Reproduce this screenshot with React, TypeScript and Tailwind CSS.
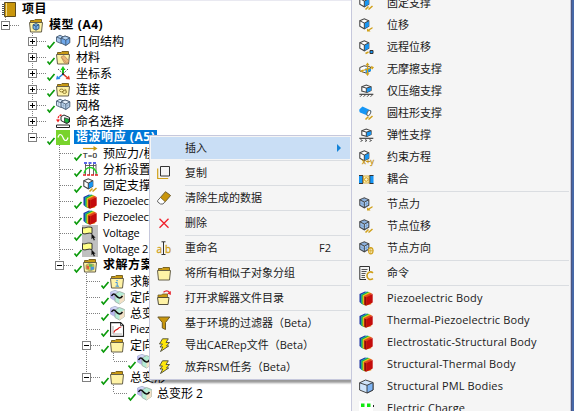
import type { ReactNode } from 'react';

/* ---------- icons ---------- */

function Icon({ children, size = 15 }: { children: ReactNode; size?: number }) {
  return (
    <svg width={size} height={size} viewBox="0 0 15 15" fill="none" className="block shrink-0 overflow-visible">
      {children}
    </svg>
  );
}

const Folder = ({ children }: { children?: ReactNode }) => (
  <Icon>
    <path d="M1.5 4V2.5H5L6 1.500h6.500v2.500" fill="#c99a12" stroke="#7a6426" />
    <path d="M.5 4.5h13l-1 9.5h-11z" fill="#fff3a6" stroke="#66604a" />
    {children}
  </Icon>
);

const Book = () => (
  <Icon>
    <path d="M2.5.5h11v14h-11z" fill="#c9960c" stroke="#5d4a1c" />
    <path d="M4.5 1v13" stroke="#f3dc8b" />
    <path d="M0 2.5h4M0 4.5h4M0 6.5h4M0 8.5h4M0 10.5h4M0 12.5h4" stroke="#555" strokeDasharray="3 1" />
  </Icon>
);

const ModelIcon = () => (
  <Folder>
    <path d="M7 5.5l3 1.3v3.8L7 12.2l-3-1.6V6.8z" fill="#7db7ee" stroke="#24476e" strokeWidth=".8" />
    <path d="M4 6.8l3 1.4 3-1.4M7 8.2v4" stroke="#24476e" strokeWidth=".8" />
  </Folder>
);

const Blocks = ({ mesh = false }: { mesh?: boolean }) => (
  <Icon>
    <path d="M.5 3L4 1.2 7.5 3v4.5L5 9.5.5 7.5z" fill={mesh ? '#d5e6f7' : '#a9c9ec'} stroke="#4b6078" strokeWidth=".9" />
    <path d="M5 4l4-2 4.8 1.8v5l-4 2.7L5 9z" fill={mesh ? '#bcd8f3' : '#6fa8ea'} stroke="#3c5068" strokeWidth=".9" />
    <path d="M5 4l4.8 2 4-2.2L9 2z" fill={mesh ? '#e6f0fa' : '#b5d4f5'} stroke="#3c5068" strokeWidth=".8" />
    <path d="M9.800 6v5.500M.5 3L5 4.8" stroke="#3c5068" strokeWidth=".8" />
    {mesh && <path d="M7.500 5v5M11.800 5v5M5 6.500l4.800 2 4-2.300M2.500 4v4.300" stroke="#8a9cae" strokeWidth=".5" />}
  </Icon>
);

const Material = () => (
  <Folder>
    <path d="M5 7l3-1.500L13 11l-2 2.500-2.500-.5z" fill="#e8b77a" stroke="#b08050" strokeWidth=".7" />
    <path d="M6 8l4.500 4.500" stroke="#c89058" strokeWidth=".6" />
  </Folder>
);

const Axes = () => (
  <Icon>
    <path d="M2 3l10 9M12 3L3 12" stroke="#555" strokeDasharray="1.5 1" />
    <path d="M7 8V3" stroke="#18b818" strokeWidth="2" />
    <path d="M4.500 4L7 0l2.500 4z" fill="#18c818" />
    <path d="M7 8l-4 3.500" stroke="#2687e8" strokeWidth="1.5" />
    <path d="M0 13.500l1-4 3.500 3.500z" fill="#2687e8" />
    <path d="M7 8l4 3.500" stroke="#e23c2a" strokeWidth="1.5" />
    <path d="M14 13.500L9.500 13 13 9.500z" fill="#e23c2a" />
    <rect x="6" y="7" width="2" height="2" fill="#333" />
  </Icon>
);

const Connections = () => (
  <Folder>
    <ellipse cx="5.5" cy="8.500" rx="2" ry="1.400" stroke="#8a7428" strokeWidth=".9" />
    <ellipse cx="8.500" cy="10" rx="2" ry="1.400" stroke="#8a7428" strokeWidth=".9" />
    <path d="M8.500 7.300l2 1" stroke="#8a7428" strokeWidth=".9" />
  </Folder>
);

const Named = () => (
  <Icon>
    <path d="M5 2.500L8 1l5.500 2.500V8L10.500 9.500 5 6.500z" fill="#fff" stroke="#222" />
    <path d="M8.500 3.700l4.500 1.500V8l-2 1.200-2.500-1.400z" fill="#17b53a" stroke="#222" strokeWidth=".7" />
    <path d="M5.500 1C3 1.300 2 3 2 5.500" stroke="#e22" strokeWidth="1.300" strokeDasharray="2 .8" />
    <path d="M0 5.500h4L2 8.500z" fill="#e22" />
    <path d="M.5 11h13v2.500H.5z" fill="#fff" stroke="#222" />
  </Icon>
);

const Harmonic = () => (
  <Icon>
    <path d="M0 0h14v15H0z" fill="#78d32c" />
    <path d="M2 7.5c1-4 3.500-4 5 0s4 4 5 0" stroke="#fff" strokeWidth="1.2" />
  </Icon>
);

const Prestress = () => (
  <Icon>
    <path d="M0 2.500h11" stroke="#c99a12" strokeWidth="1.2" />
    <path d="M10.500 0L14.500 2.500l-4 2.500z" fill="#c99a12" />
    <text x="0" y="12" fontSize="8" fill="#222" stroke="#222" strokeWidth=".2" fontFamily="Open Sans, sans-serif" textLength="14">
      T=0
    </text>
  </Icon>
);

const Settings = () => (
  <Icon>
    <path d="M1 1h12.500" stroke="#2233dd" strokeWidth="1.600" strokeDasharray="3 1.500" />
    <path d="M2.500 2v11M6.500 2v11M10.500 2v11M13 2v11M2 3.500h11" stroke="#555" strokeWidth=".9" />
    <path d="M1 11.500C3 3.500 11 3.500 14 11.500" stroke="#20d020" strokeWidth="1.400" />
    <path d="M0 13h15" stroke="#e02020" strokeWidth="1.400" strokeDasharray="3 1" />
  </Icon>
);

/* Small cube with a blue face; the mark at the lower right tells the kind. */
const Cube = ({ children, nodal = false }: { children?: ReactNode; nodal?: boolean }) => (
  <Icon>
    <path d="M.8 2.800L5.300.8l4.500 2v5.400l-4.500 2.600L.8 8.200z" fill={nodal ? '#a9cdf4' : '#fff'} stroke="#454545" strokeWidth="1.1" />
    {!nodal && <path d="M5.300 5l4.500-2v5.200l-4.500 2.600z" fill="#1696f5" />}
    {nodal && <path d="M3 1.800l4.600 2.400v5.200M7.600 1.800L3 4v5.400M.8 5.500l4.500 2.400 4.500-2.400" stroke="#6f96c8" strokeWidth=".6" />}
    <path d="M.8 2.800l4.500 2.200 4.500-2.200M5.300 5v5.800" stroke="#454545" strokeWidth="1" />
    {children}
  </Icon>
);
const Hatch = () => <path d="M6.500 13.500l3-3M9.500 13.500l4-3.500" stroke="#d0a01a" strokeWidth="1.500" />;
const SmallArrow = () => <path d="M8 13.500v-3l1.300 1L13.500 9v1.400l-3 1.800 1 1.300z" fill="#d0a01a" />;

const FixedIcon = () => (<Cube><Hatch /></Cube>);
const DispIcon = () => (<Cube><SmallArrow /></Cube>);
const RemoteIcon = () => (
  <Cube>
    <path d="M6.500 13.500l3-1.500" stroke="#d0a01a" strokeWidth="1.4" />
    <path d="M11 10.500h3v3h-3z" fill="#1696f5" stroke="#333" />
  </Cube>
);
const Frictionless = () => (
  <Icon>
    <path d="M.8 5.500L5 3.800l6.500 1.200v4L7 11 .8 9z" fill="#fff" stroke="#454545" />
    <path d="M6 6.500h6V9L7 11z" fill="#1696f5" />
    <path d="M8.500 2v10M2 9l12-3.500" stroke="#d0a01a" strokeWidth="1.3" />
    <path d="M6.500 3.300L8.500.5l2 2.800zM6.500 11.200l2 2.800 2-2.800zM12 3.800l3 1.500-2 2.500zM4 7.500L.8 9.300 4 10.500z" fill="#d0a01a" />
  </Icon>
);
const OnGround = ({ spring = false }: { spring?: boolean }) => (
  <Icon>
    <path d="M2.800 2.800L7.300 1l4.800 1.800V6.500L8 8.500 2.800 7z" fill="#fff" stroke="#454545" strokeWidth="1.1" />
    <path d="M7.300 4l4.800-1v3.500L7.300 8.500z" fill="#1696f5" />
    <path d="M2.800 2.800l4.500 1.300 4.800-1.300M7.300 4.100v4.400" stroke="#454545" />
    <path d="M.3 10.300h14" stroke="#333" strokeWidth="1.1" />
    <path d={spring ? 'M1.500 11.500l2 1-2 1M6 11.500l2 1-2 1M10.500 11.500l2 1-2 1' : 'M1 12.800l2-2M4.500 12.800l2-2M8 12.800l2-2M11.500 12.800l2-2'} stroke="#444" strokeWidth=".9" />
  </Icon>
);
const Cylinder = () => (
  <Icon>
    <path d="M.5 3.200L3.500.5 12 4.500c1 1.800-1.300 4.800-3.500 5L1 6.500C.2 5.500.2 4.200.5 3.200z" fill="#1696f5" />
    <ellipse cx="9.800" cy="7" rx="1.600" ry="2.800" transform="rotate(28 9.800 7)" fill="#fff" stroke="#666" strokeWidth=".9" />
    <Hatch />
  </Icon>
);
const Constraint = () => (
  <Cube>
    <text x="3" y="14" fontSize="7.500" fill="#c8981a" stroke="#c8981a" strokeWidth=".3" fontFamily="Open Sans, sans-serif" textLength="12">
      x+y
    </text>
  </Cube>
);
const Coupling = () => (
  <Icon>
    <path d="M0 3.500h3.500v8H0zM11 3.500h3.500v8H11z" fill="#1696f5" />
    <path d="M0 3.500h4M0 11.500h4M10.500 3.500h4M10.500 11.500h4M3.800 3.500v8M10.800 3.500v8" stroke="#333" />
    <path d="M4.500 4h5.500v7H4.500z" fill="#fff4c8" stroke="#d0a01a" strokeWidth=".8" />
    <circle cx="7.300" cy="7.500" r="1.800" stroke="#d0a01a" />
  </Icon>
);
const NodalForce = () => (<Cube nodal><SmallArrow /></Cube>);
const NodalDisp = () => (<Cube nodal><Hatch /></Cube>);
const NodalDir = () => (
  <Cube nodal>
    <ellipse cx="11.800" cy="9.800" rx="2.200" ry="3.200" fill="#fff8dc" stroke="#d0a01a" strokeWidth="1.1" />
    <path d="M9.500 9.800h5M11.800 6.500v6.500" stroke="#d0a01a" strokeWidth=".8" />
  </Cube>
);
const Command = () => (
  <Icon>
    <path d="M10.500 5V.5H.8v13H7" stroke="#333" />
    <path d="M2.500 3.500h6M2.500 5.500h5M2.500 7.500h4M2.500 9.500h3.500M2.500 11.500h3.500" stroke="#444" strokeWidth=".9" />
    <path d="M14 6.800c-2.500-2-6-.5-6 3s3.500 4.500 6 2.800" stroke="#d0a01a" strokeWidth="1.6" />
  </Icon>
);

const Rainbow = () => (
  <Icon>
    <path d="M.500 3L6.500.2l1 13L3 13 .500 11z" fill="#1a2fa0" />
    <path d="M1.800 3.500L7.800.5 9.500 1v12l-5 1-2.700-1.800z" fill="#18a0c0" />
    <path d="M2.600 3.900L8.800.8l1.700.5v12l-5 1-2.900-1.700z" fill="#28b038" />
    <path d="M3.700 4.400L10 1.300l1.500.5v11.500L6 14.300l-2.300-1.200z" fill="#e8d820" />
    <path d="M4.600 4.900L11 1.800l1.300.5v11L6.500 14.600l-1.900-1z" fill="#e87818" />
    <path d="M5.300 5.200l1.900 1v8.600l-1.900-1.100z" fill="#8c0c0c" />
    <path d="M5.300 5.200L12 2.200l1.700.9-6.500 3.100z" fill="#e04020" />
    <path d="M7.200 6.200l6.500-3.100v8.400l-6.500 3.300z" fill="#c40c0c" />
  </Icon>
);

const Voltage = () => (
  <Icon>
    <path d="M-1 -1h16v16H-1z" fill="#c0c0c0" />
    <path d="M-.5 1.500c2.500 1.500 4-1.500 9.500 0v6c-4-1.500-6 1.500-9.500 0z" fill="#ffff88" stroke="#222" strokeWidth=".9" />
    <path d="M8.500 7.500v5.800l1.300-1.200 1 2.400 1.100-.5-1-2.200h1.700z" fill="#111" />
  </Icon>
);

const Solution = () => (
  <Folder>
    <path d="M3 7l3-1.500L11 6.500v5l-4 1.500-4-2z" fill="#d8cc50" stroke="#8a8a60" strokeWidth=".6" />
    <path d="M3.500 7.500l2.500.5v3.500l-2.500-1z" fill="#e05a3c" />
    <path d="M6 6.200h3.500v2.600H6z" fill="#5cb860" />
    <path d="M7.500 8.800H11v2.500l-3.500 1.200z" fill="#4a96d8" />
  </Folder>
);

const SolInfo = () => (
  <Folder>
    <path d="M5.500 8.500H7.200v3.500M5.500 12.200h3.500" stroke="#3a92e0" strokeWidth="1" />
    <path d="M6.400 6h1.300v1.300H6.400z" fill="#3a92e0" />
  </Folder>
);

const Result = () => (
  <Icon>
    <path d="M.5 2L5 .3 9 2v7L5 10.500.5 8z" fill="#d3d9f8" stroke="#a8b2cc" strokeWidth=".8" />
    <path d="M.5 2L5 3.800V10.500L.5 8z" fill="#b9b6ee" />
    <path d="M5 4l4.500-2.500 5 2v7l-5 3.500L5 11.500z" fill="#b4ecd6" stroke="#9aa8a0" strokeWidth=".8" />
    <path d="M9.500 7l5-3v6.500l-5 3.500z" fill="#f3e0c6" />
    <path d="M1.500 6c1.500-3 3-2.500 4.500-.5S10 9.500 12.500 6" stroke="#111" strokeWidth="1.500" />
  </Icon>
);

const Chart = () => (
  <Icon>
    <path d="M.6.600h10L13.500 3.500v10.900H.600z" fill="#fff" stroke="#222" strokeWidth="1.100" />
    <path d="M10.500.6v3h3" stroke="#222" strokeWidth=".8" />
    <path d="M3 4v8h9" stroke="#999" strokeWidth=".8" />
    <path d="M3.800 10.500c1.500-4 3-2 4.500-4.200 1-1.300 2-1.300 3-1.300" stroke="#d81818" strokeWidth="1.200" />
  </Icon>
);

const PmlBody = () => (
  <Icon>
    <path d="M.6 3.800L6.500 1l7.500 2.500v7.500L8 14 .6 11z" fill="#cfe4fb" stroke="#333" strokeWidth=".9" />
    <path d="M8 6.300l6-2.800V11l-6 3z" fill="#7db4f5" stroke="#333" strokeWidth=".9" />
    <path d="M.6 3.800L8 6.300" stroke="#333" strokeWidth=".9" />
  </Icon>
);
const Charge = () => (
  <Icon>
    <path d="M0 0h14v15H0z" fill="#fff" />
    <path d="M2 2.500h3.500V6H2zM8 2.500h3.500V6H8z" fill="#10e810" />
    <path d="M14 4h1v2h-1z" fill="#222" />
  </Icon>
);

const Copy = () => (
  <Icon>
    <path d="M3.500.5h9v9.500h-9z" stroke="#333" />
    <path d="M.7 2.500v10h10.500" stroke="#d0a01a" strokeWidth="1.200" />
  </Icon>
);
const Eraser = () => (
  <Icon>
    <path d="M.7 9.500L8.500.8l5 3.700L6 13H3.500L.7 11z" fill="#fff" stroke="#666" />
    <path d="M3.500 6.500L8.500.8l5 3.700-5.300 6.200z" fill="#c9960c" stroke="#7a6630" strokeWidth=".8" />
  </Icon>
);
const Cross = () => (
  <Icon>
    <path d="M2.500 2.800l9 9M11.500 2.800l-9 9" stroke="#f0202a" strokeWidth="1.300" />
  </Icon>
);
const Rename = () => (
  <Icon>
    <text x="-.5" y="11.500" fontSize="10" fill="#d0a01a" stroke="#d0a01a" strokeWidth=".3" fontFamily="Open Sans, sans-serif">a</text>
    <text x="8" y="11.500" fontSize="10" fill="#d0a01a" stroke="#d0a01a" strokeWidth=".3" fontFamily="Open Sans, sans-serif">b</text>
    <path d="M6.500 1v12.500M4.500.800h4M4.500 13.500h4" stroke="#333" />
  </Icon>
);
const OpenDir = () => (
  <Icon>
    <path d="M1 6V4h3.500l1-1h5v3" fill="#c99a12" stroke="#6b5a2a" strokeWidth=".8" />
    <path d="M.5 6.500h11.500l-1 7H1.500z" fill="#fff3a6" stroke="#55503c" />
    <path d="M6.500 1.300C8.500-.3 11-.3 12.500 1.500" stroke="#e8202a" strokeWidth="1.200" />
    <path d="M13.800 0v4l-3.500-1.500z" fill="#e8202a" />
  </Icon>
);
const Funnel = () => (
  <Icon>
    <path d="M.8 1h12L8.500 6.500v7L5.300 12V6.500z" fill="#c9960c" stroke="#6b5a2a" />
  </Icon>
);
const Bolt = () => (
  <Icon>
    <path d="M5.500.8h5.800L9 4.500h3.500L9.500 8h2.200L3.500 13.500l2.300-4.500H3L5.500 6H2.500z" fill="#ffe80a" stroke="#4a4a3a" strokeWidth=".9" />
  </Icon>
);

/* ---------- outline tree ---------- */

type Toggle = 'box' | 'tee' | 'end';
interface Node {
  level: number;
  label: string;
  icon: ReactNode;
  toggle?: Toggle;
  plus?: boolean;
  last?: boolean;
  check?: boolean;
  bold?: boolean;
  latin?: boolean;
  selected?: boolean;
  /** An ancestor one level up has further siblings below. */
  through?: boolean;
}

const nodes: Node[] = [
  { level: 0, label: '项目', icon: <Book />, bold: true },
  { level: 1, label: '模型 (A4)', icon: <ModelIcon />, toggle: 'box', last: true, bold: true },
  { level: 2, label: '几何结构', icon: <Blocks />, toggle: 'box', plus: true, check: true },
  { level: 2, label: '材料', icon: <Material />, toggle: 'box', plus: true, check: true },
  { level: 2, label: '坐标系', icon: <Axes />, toggle: 'box', plus: true, check: true },
  { level: 2, label: '连接', icon: <Connections />, toggle: 'box', plus: true, check: true },
  { level: 2, label: '网格', icon: <Blocks mesh />, toggle: 'box', plus: true, check: true },
  { level: 2, label: '命名选择', icon: <Named />, toggle: 'box', plus: true },
  { level: 2, label: '谐波响应 (A5)', icon: <Harmonic />, toggle: 'box', last: true, check: true, bold: true, selected: true },
  { level: 3, label: '预应力/模态', icon: <Prestress />, toggle: 'tee', check: true },
  { level: 3, label: '分析设置', icon: <Settings />, toggle: 'tee', check: true },
  { level: 3, label: '固定支撑', icon: <FixedIcon />, toggle: 'tee', check: true },
  { level: 3, label: 'Piezoelectric', icon: <Rainbow />, toggle: 'tee', check: true, latin: true },
  { level: 3, label: 'Piezoelectric', icon: <Rainbow />, toggle: 'tee', check: true, latin: true },
  { level: 3, label: 'Voltage', icon: <Voltage />, toggle: 'tee', check: true, latin: true },
  { level: 3, label: 'Voltage 2', icon: <Voltage />, toggle: 'tee', check: true, latin: true },
  { level: 3, label: '求解方案', icon: <Solution />, toggle: 'box', last: true, check: true, bold: true },
  { level: 4, label: '求解', icon: <SolInfo />, toggle: 'tee', check: true },
  { level: 4, label: '定向', icon: <Result />, toggle: 'tee', check: true },
  { level: 4, label: '总变', icon: <Result />, toggle: 'tee', check: true },
  { level: 4, label: 'Piez', icon: <Chart />, toggle: 'tee', check: true, latin: true },
  { level: 4, label: '定向', icon: <Folder />, toggle: 'box', check: true },
  { level: 5, label: '', icon: <Result />, toggle: 'end', check: true, through: true },
  { level: 4, label: '总变形', icon: <Folder />, toggle: 'box', last: true, check: true },
  { level: 5, label: '总变形 2', icon: <Result />, toggle: 'end', check: true },
];

function Cell({ node }: { node: Node }) {
  const { toggle, plus, last, check } = node;
  const stop = last || toggle === 'end';
  return (
    <svg width="27" height="16" viewBox="0 0 27 16" fill="none" className="block shrink-0 overflow-visible" shapeRendering="crispEdges">
      <path d={stop ? 'M5.500 0v8' : 'M5.500 0v16'} stroke="#808080" strokeDasharray="1 1" />
      <path d="M6 8.500h14" stroke="#808080" strokeDasharray="1 1" />
      {toggle === 'box' && (
        <>
          <path d="M1.500 4.500h8v8h-8z" fill="#fff" stroke="#808080" />
          <path d="M3 8.500h5" stroke="#000" />
          {plus && <path d="M5.500 6v5" stroke="#000" />}
        </>
      )}
      {check && <path d="M20.500 12.500l2 2.500 5-6" stroke="#0a9a0a" strokeWidth="1.700" shapeRendering="auto" />}
    </svg>
  );
}

function TreeRow({ node }: { node: Node }) {
  const font = node.bold
    ? 'text-[12px] font-bold tracking-[0.55px]'
    : node.latin
      ? 'text-[11px] tracking-[-0.25px]'
      : 'pt-px text-[12px]';
  return (
    <div className="flex h-4 items-center whitespace-nowrap">
      {Array.from({ length: Math.max(0, node.level - 1) }, (_, i) => (
        <div key={i} className="h-4 w-[27px] shrink-0">
          {node.through && i === node.level - 2 && (
            <svg width="27" height="16" fill="none" className="block" shapeRendering="crispEdges">
              <path d="M5.500 0v16" stroke="#808080" strokeDasharray="1 1" />
            </svg>
          )}
        </div>
      ))}
      {node.level > 0 && <Cell node={node} />}
      <div className="ml-0.5">{node.icon}</div>
      {node.label && (
        <span
          className={`ml-[3px] px-0.5 leading-[14px] ${font} ${
            node.selected ? 'h-[14px] bg-[#0078d7] text-white' : 'text-black'
          }`}
        >
          {node.label}
        </span>
      )}
    </div>
  );
}

/* ---------- menus ---------- */

interface Entry {
  label: string;
  icon?: ReactNode;
  hint?: string;
  active?: boolean;
  divider?: boolean;
  latin?: boolean;
}

const actions: Entry[] = [
  { label: '插入', active: true, divider: true },
  { label: '复制', icon: <Copy />, divider: true },
  { label: '清除生成的数据', icon: <Eraser />, divider: true },
  { label: '删除', icon: <Cross />, divider: true },
  { label: '重命名', icon: <Rename />, hint: 'F2', divider: true },
  { label: '将所有相似子对象分组', icon: <Folder />, divider: true },
  { label: '打开求解器文件目录', icon: <OpenDir />, divider: true },
  { label: '基于环境的过滤器（Beta）', icon: <Funnel /> },
  { label: '导出CAERep文件（Beta）', icon: <Bolt /> },
  { label: '放弃RSM任务（Beta）', icon: <Bolt /> },
];

const inserts: Entry[] = [
  { label: '固定支撑', icon: <FixedIcon /> },
  { label: '位移', icon: <DispIcon /> },
  { label: '远程位移', icon: <RemoteIcon /> },
  { label: '无摩擦支撑', icon: <Frictionless /> },
  { label: '仅压缩支撑', icon: <OnGround /> },
  { label: '圆柱形支撑', icon: <Cylinder /> },
  { label: '弹性支撑', icon: <OnGround spring /> },
  { label: '约束方程', icon: <Constraint /> },
  { label: '耦合', icon: <Coupling />, divider: true },
  { label: '节点力', icon: <NodalForce /> },
  { label: '节点位移', icon: <NodalDisp /> },
  { label: '节点方向', icon: <NodalDir />, divider: true },
  { label: '命令', icon: <Command />, divider: true },
  { label: 'Piezoelectric Body', icon: <Rainbow />, latin: true },
  { label: 'Thermal-Piezoelectric Body', icon: <Rainbow />, latin: true },
  { label: 'Electrostatic-Structural Body', icon: <Rainbow />, latin: true },
  { label: 'Structural-Thermal Body', icon: <Rainbow />, latin: true },
  { label: 'Structural PML Bodies', icon: <PmlBody />, latin: true },
  { label: 'Electric Charge', icon: <Charge />, latin: true },
];

function MenuItems({ entries }: { entries: Entry[] }) {
  return (
    <>
      {entries.map((e) => (
        <div key={e.label}>
          <div className={`flex h-[22px] items-center pl-1.5 ${e.active ? 'bg-[#c9def5]' : ''}`}>
            <div className="w-7 shrink-0">{e.icon}</div>
            <span
              className={`flex-1 whitespace-nowrap text-[11px] leading-4 text-[#1a1a1a] ${e.latin ? 'tracking-[0.14px]' : ''}`}
            >
              {e.label}
            </span>
            {e.hint && <span className="mr-[19px] text-[11px] text-[#1a1a1a]">{e.hint}</span>}
            {e.active && (
              <svg width="4" height="8" viewBox="0 0 4 8" className="mr-[9px]">
                <path d="M0 0l4 4-4 4z" fill="#1583d8" />
              </svg>
            )}
          </div>
          {e.divider && (
            <div className="h-[3px] pt-px pl-[34px]">
              <div className="h-px bg-[#dadde1]" />
            </div>
          )}
        </div>
      ))}
    </>
  );
}

export default function App() {
  return (
    <div className="relative h-[411px] w-[574px] overflow-hidden bg-white font-['Open_Sans','Noto_Sans_CJK_SC',sans-serif]">
      <div className="h-px bg-[#e9e9f1]" />
      {nodes.map((n, i) => (
        <TreeRow key={i} node={n} />
      ))}

      <div className="absolute top-[135px] left-[149px] h-[245px] w-[203px] border border-[#c6c8dc] bg-[#f5f5f5] p-px shadow-[2px_3px_2px_rgba(0,0,0,0.4)]">
        <MenuItems entries={actions} />
      </div>

      <div className="absolute top-[-10px] left-[351px] flex h-[430px] w-[223px]">
        <div className="w-[220px] border-x border-[#c6c8dc] bg-[#f5f5f5] px-px pt-0.5">
          <MenuItems entries={inserts} />
        </div>
        <div className="w-px bg-[#4b5680]" />
        <div className="flex-1 bg-[#4668a8]" />
      </div>
    </div>
  );
}
